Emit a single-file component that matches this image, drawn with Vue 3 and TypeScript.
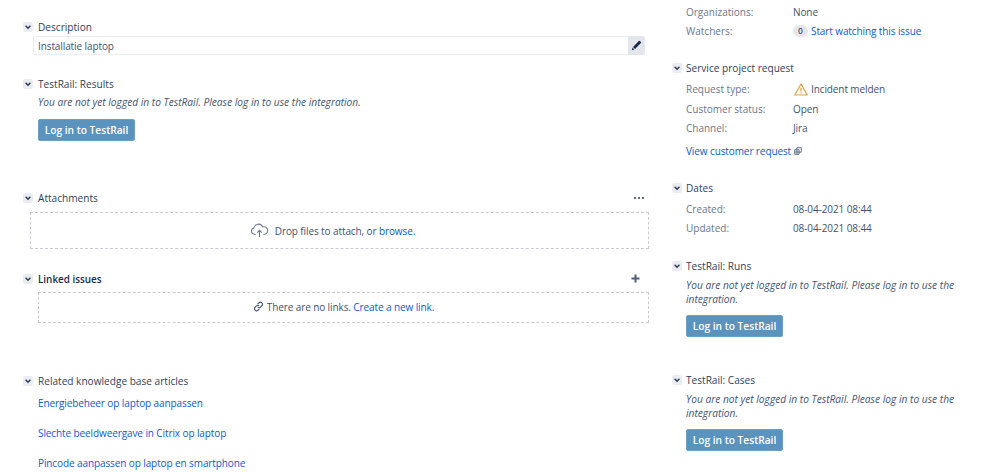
<script setup lang="ts">
const note = 'You are not yet logged in to TestRail. Please log in to use the integration.'
const articles: string[] = [
  'Energiebeheer op laptop aanpassen',
  'Slechte beeldweergave in Citrix op laptop',
  'Pincode aanpassen op laptop en smartphone',
]
</script>

<template>
  <div class="page">
    <main class="left">
      <section class="sec s-desc">
        <header class="head">
          <span class="tog"><svg viewBox="0 0 10 10"><path d="M2.6 3.8 5 6.2l2.4-2.4" /></svg></span>
          <h3>Description</h3>
        </header>
        <div class="field">
          <span class="field-text">Installatie laptop</span>
          <span class="pencil">
            <svg viewBox="0 0 12 12" width="11" height="11"><path d="M8.6 1.2a.8.8 0 0 1 1.1 0l1.1 1.1a.8.8 0 0 1 0 1.1L4.4 9.8 2.2 7.6zM1.700 8.300l2 2-2.800.8z" /></svg>
          </span>
        </div>
      </section>

      <section class="sec s-results">
        <header class="head">
          <span class="tog"><svg viewBox="0 0 10 10"><path d="M2.6 3.8 5 6.2l2.4-2.4" /></svg></span>
          <h3>TestRail: Results</h3>
        </header>
        <div class="body">
          <p class="note">{{ note }}</p>
          <button class="btn" type="button">Log in to TestRail</button>
        </div>
      </section>

      <section class="sec s-attach">
        <header class="head">
          <span class="tog"><svg viewBox="0 0 10 10"><path d="M2.6 3.8 5 6.2l2.4-2.4" /></svg></span>
          <h3>Attachments</h3>
          <span class="dots"><i></i><i></i><i></i></span>
        </header>
        <div class="drop drop-a">
          <svg class="cloud" viewBox="0 0 20 16" width="19" height="15">
            <path d="M6 12H4.600a3.400 3.400 0 0 1-.5-6.700 4.900 4.900 0 0 1 9.300-1.200 4 4 0 0 1 2.300 7.900H14" />
            <path d="M10 15V8M7.600 10.200 10 7.800l2.400 2.400" />
          </svg>
          <span>Drop files to attach, or <a>browse.</a></span>
        </div>
      </section>

      <section class="sec s-links">
        <header class="head">
          <span class="tog"><svg viewBox="0 0 10 10"><path d="M2.6 3.8 5 6.2l2.4-2.4" /></svg></span>
          <h3 class="strong">Linked issues</h3>
          <svg class="plus" viewBox="0 0 9 9" width="9" height="9"><path d="M4.500 .5v8M.5 4.500h8" /></svg>
        </header>
        <div class="drop drop-l">
          <svg class="chain" viewBox="0 0 12 12" width="11" height="11">
            <path d="M5 3.400 6.400 2a2.200 2.200 0 0 1 3.200 3.200L8.200 6.600a2.200 2.200 0 0 1-3 .1" />
            <path d="M7 8.600 5.600 10a2.200 2.200 0 0 1-3.200-3.200L3.800 5.400a2.200 2.200 0 0 1 3-.1" />
          </svg>
          <span>There are no links. <a>Create a new link.</a></span>
        </div>
      </section>

      <section class="sec s-kb">
        <header class="head">
          <span class="tog"><svg viewBox="0 0 10 10"><path d="M2.6 3.8 5 6.2l2.4-2.4" /></svg></span>
          <h3>Related knowledge base articles</h3>
        </header>
        <ul class="kb">
          <li v-for="a in articles" :key="a"><a>{{ a }}</a></li>
        </ul>
      </section>
    </main>

    <aside class="right">
      <div class="rows r-top">
        <div class="row"><span class="k">Organizations:</span><span class="v">None</span></div>
        <div class="row">
          <span class="k">Watchers:</span>
          <span class="v"><span class="badge">0</span> <a>Start watching this issue</a></span>
        </div>
      </div>

      <section class="sec r-req">
        <header class="head">
          <span class="tog"><svg viewBox="0 0 10 10"><path d="M2.6 3.8 5 6.2l2.4-2.4" /></svg></span>
          <h3>Service project request</h3>
        </header>
        <div class="rows">
          <div class="row tall">
            <span class="k">Request type:</span>
            <span class="v with-ic">
              <svg viewBox="0 0 14 13" width="14" height="13"><path class="warn" d="M7 1 13.200 12H.8z" /><path class="warn-m" d="M7 4.800v3.700M7 9.500v1.100" /></svg>
              Incident melden
            </span>
          </div>
          <div class="row"><span class="k">Customer status:</span><span class="v">Open</span></div>
          <div class="row"><span class="k">Channel:</span><span class="v">Jira</span></div>
        </div>
        <a class="view">View customer request
          <svg viewBox="0 0 8 8" width="8" height="8"><path d="M.7 2.700h4.400v4.600H.7zM2.800 2.700V.7h4.500v4.500H5.100M.7 5h4.400M2.900 2.700v4.600" /></svg>
        </a>
      </section>

      <section class="sec r-dates">
        <header class="head">
          <span class="tog"><svg viewBox="0 0 10 10"><path d="M2.6 3.8 5 6.2l2.4-2.4" /></svg></span>
          <h3>Dates</h3>
        </header>
        <div class="rows">
          <div class="row"><span class="k">Created:</span><span class="v">08-04-2021 08:44</span></div>
          <div class="row"><span class="k">Updated:</span><span class="v">08-04-2021 08:44</span></div>
        </div>
      </section>

      <section class="sec r-runs">
        <header class="head">
          <span class="tog"><svg viewBox="0 0 10 10"><path d="M2.6 3.8 5 6.2l2.4-2.4" /></svg></span>
          <h3>TestRail: Runs</h3>
        </header>
        <div class="body">
          <p class="note">{{ note }}</p>
          <button class="btn" type="button">Log in to TestRail</button>
        </div>
      </section>

      <section class="sec r-cases">
        <header class="head">
          <span class="tog"><svg viewBox="0 0 10 10"><path d="M2.6 3.8 5 6.2l2.4-2.4" /></svg></span>
          <h3>TestRail: Cases</h3>
        </header>
        <div class="body">
          <p class="note">{{ note }}</p>
          <button class="btn" type="button">Log in to TestRail</button>
        </div>
      </section>
    </aside>
  </div>
</template>

<style>
html, body { margin: 0; background: #fff; overflow: hidden; }
</style>

<style scoped>
.page {
  display: flex;
  width: 999px;
  height: 472px;
  overflow: hidden;
  font-family: "Open Sans", "Noto Sans", sans-serif;
  font-size: 10px;
  letter-spacing: -0.1px;
  line-height: 14px;
  color: #42526e;
}
.left { width: 649px; padding-left: 23px; box-sizing: border-box; flex: none; }
.right { flex: 1; margin-left: 23px; min-width: 0; padding-right: 42px; }

.head { display: flex; align-items: center; height: 14px; }
.head h3 { margin: 0; font: inherit; font-size: 10.1px; letter-spacing: 0; color: #2f3f5c; font-weight: 500; }
.head h3.strong { font-size: 9.9px; font-weight: 600; color: #172b4d; }
.tog { width: 10px; height: 10px; border-radius: 2px; background: #ebecf0; margin-right: 5px; flex: none; display: flex; }
.right .tog { margin-right: 4px; }
.tog svg { width: 10px; height: 10px; }
.tog path { fill: none; stroke: #253858; stroke-width: 1.4; }

.s-desc { margin-top: 20px; }
.s-results { margin-top: 22px; }
.s-attach { margin-top: 50px; }
.s-links { margin-top: 23px; }
.s-kb { margin-top: 51px; }

.field { display: flex; margin: 2px 4px 0 10px; height: 19px; }
.field-text { flex: 1; border: 1px solid #ebecf0; border-right: 0; border-radius: 2px 0 0 2px; padding: 1px 0 0 4px; line-height: 16px; height: 19px; box-sizing: border-box; }
.pencil { width: 17px; background: #e4e6eb; border-radius: 0 2px 2px 0; display: flex; align-items: center; justify-content: center; }
.pencil path { fill: #172b4d; }

.body { padding-left: 15px; }
.note { margin: 4px 0 0; font-size: 10.2px; letter-spacing: 0; font-style: italic; color: #45556f; }
.btn {
  display: block;
  margin-top: 10px;
  width: 97px;
  height: 22px;
  padding: 0;
  border: 1px solid #6da0c6;
  border-radius: 2px;
  background: #5a93bd;
  color: #fff;
  font: 600 10.2px "Open Sans", "Noto Sans", sans-serif;
}

.dots { margin-left: auto; margin-right: 5px; display: flex; gap: 2px; }
.dots i { width: 2px; height: 2px; border-radius: 50%; background: #253858; }
.plus { margin-left: auto; margin-right: 9px; margin-bottom: 2px; }
.plus path { stroke: #505f79; stroke-width: 2; fill: none; }

.drop { display: flex; align-items: center; justify-content: center; border: 1px dashed #c9cbd0; box-sizing: border-box; }
.drop a, .kb a, .view, .row a { color: #0c5bd0; }
.drop-a { margin: 7px 0 0 7px; height: 37px; gap: 6px; padding-right: 14px; }
.cloud path { fill: none; stroke: #6b778c; stroke-width: 1.1; }
.drop-l { margin: 6px 0 0 15px; height: 31px; gap: 3px; padding-bottom: 2px; }
.chain path { fill: none; stroke: #42526e; stroke-width: 1.2; }

.kb { list-style: none; margin: 8px 0 0 15px; padding: 0; display: flex; flex-direction: column; gap: 16px; }

.rows { display: flex; flex-direction: column; }
.row { display: flex; height: 19px; align-items: center; }
.row.tall { height: 20px; }
.k { width: 107px; flex: none; color: #6b778c; letter-spacing: 0; }
.v { color: #42526e; display: flex; align-items: center; gap: 3px; }
.badge { background: #e6e7eb; border-radius: 7px; width: 15px; height: 12px; font-size: 8.5px; font-weight: 600; line-height: 12px; text-align: center; }

.r-top { margin-left: 14px; margin-top: 2px; }
.r-req { margin-top: 21px; }
.r-req .rows { margin-left: 14px; margin-top: 4px; }
.with-ic svg { margin-left: 1px; }
.warn { fill: none; stroke: #e0a03c; stroke-width: 1.2; stroke-linejoin: round; }
.warn-m { stroke: #e0a03c; stroke-width: 1.2; fill: none; }
.view { display: inline-flex; align-items: center; gap: 3px; margin: 7px 0 0 14px; }
.view svg path { fill: none; stroke: #42526e; stroke-width: .8; }
.r-dates { margin-top: 23px; }
.r-dates .rows { margin-left: 14px; margin-top: 4px; }
.r-runs { margin-top: 22px; }
.right .body { padding-left: 14px; }
.right .note { margin-top: 5px; }
.right .btn { margin-top: 9px; }
.r-cases { margin-top: 36px; }
</style>
